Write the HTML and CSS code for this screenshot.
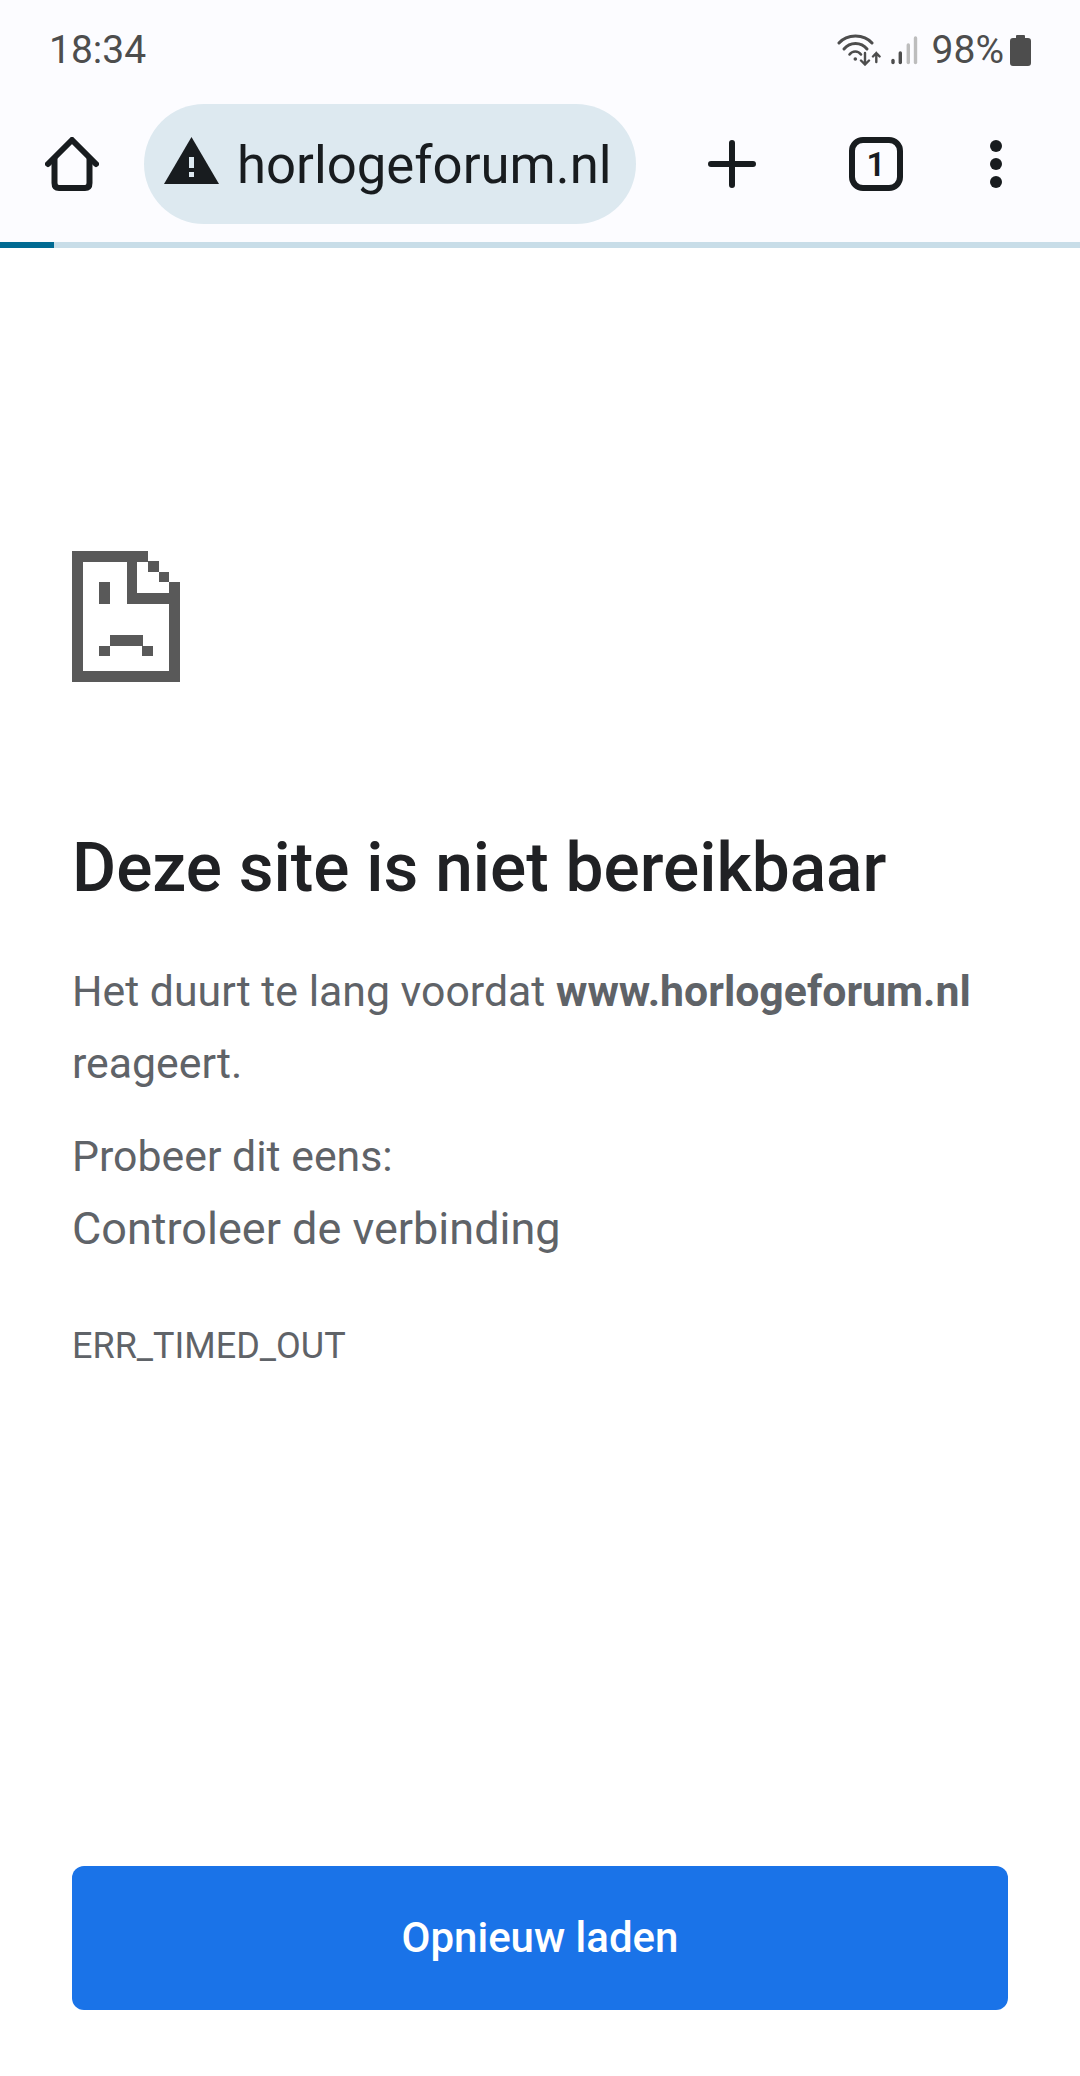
FILE: index.html
```html
<!DOCTYPE html>
<html lang="nl">
<head>
    <meta charset="UTF-8">
    <meta name="viewport" content="width=device-width, initial-scale=1.0">
    <title>horlogeforum.nl</title>
    <link rel="stylesheet" href="styles.css">
</head>
<body>
    <header class="chrome">
        <div class="status-bar">
            <span class="status-time">18:34</span>
            <div class="status-icons">
                <svg class="icon-wifi" width="44" height="32" viewBox="0 0 44 32" fill="none" stroke="#4d4d4d" stroke-linecap="round">
                    <path d="M2 9 C10 -0.500 27 -0.500 35 9" stroke-width="3"/>
                    <path d="M7 15 C13 7.500 24 7.500 30 15" stroke-width="3"/>
                    <path d="M12.500 20.500 C15.500 16.500 21 16.500 24 20.500" stroke-width="2.600"/>
                    <circle cx="18.300" cy="25" r="1.800" fill="#4d4d4d" stroke="none"/>
                    <path d="M28 19 V30 M24 26.500 L28 30.500 L32 26.500" stroke-width="2.400"/>
                    <path d="M39.300 28 V19 M36 22.500 L39.300 19 L42.600 22.500" stroke-width="2.400"/>
                </svg>
                <svg class="icon-signal" width="28" height="29" viewBox="0 0 28 29" stroke-linecap="round" stroke-width="3.400">
                    <path d="M3 24.500 V26.500" stroke="#4d4d4d"/>
                    <path d="M10.300 17 V26.500" stroke="#4d4d4d"/>
                    <path d="M18.300 9 V26.500" stroke="#bdbdbd"/>
                    <path d="M25.500 2 V26.500" stroke="#bdbdbd"/>
                </svg>
                <span class="status-battery-text">98%</span>
                <svg class="icon-battery" width="21" height="31" viewBox="0 0 21 31">
                    <path d="M7 0 H14 Q15 0 15 1 V3 H18 Q21 3 21 6 V28 Q21 31 18 31 H3 Q0 31 0 28 V6 Q0 3 3 3 H6 V1 Q6 0 7 0 Z" fill="#4d4d4d"/>
                </svg>
            </div>
        </div>
        <div class="toolbar">
            <svg class="btn-home" width="54" height="54" viewBox="0 0 54 54" fill="none" stroke="#181c1f" stroke-width="6" stroke-linecap="round" stroke-linejoin="round">
                <path d="M3 27 L27 3 L51 27"/>
                <path d="M9.500 22 V46 Q9.500 51 14 51 H40 Q44.500 51 44.500 46 V22"/>
            </svg>
            <div class="url-pill">
                <svg class="icon-warning" width="55" height="47" viewBox="0 0 55 47">
                    <path d="M27.500 0 L55 47 H0 Z" fill="#181c1f"/>
                    <rect x="25" y="20" width="5" height="11" fill="#dde9f0"/>
                    <rect x="25" y="35" width="5" height="5" fill="#dde9f0"/>
                </svg>
                <span class="url-text">horlogeforum.nl</span>
            </div>
            <svg class="btn-plus" width="48" height="48" viewBox="0 0 48 48" stroke="#181c1f" stroke-width="6" stroke-linecap="round">
                <path d="M24 3 V45 M3 24 H45"/>
            </svg>
            <div class="btn-tabs">1</div>
            <svg class="btn-menu" width="12" height="48" viewBox="0 0 12 48" fill="#181c1f">
                <circle cx="6" cy="6" r="6"/>
                <circle cx="6" cy="24" r="6"/>
                <circle cx="6" cy="42" r="6"/>
            </svg>
        </div>
        <div class="progress"><div class="progress-fill" style="width: 54px"></div></div>
    </header>

    <main class="error-page">
        <svg class="sad-tab" width="108" height="131" viewBox="0 0 108 131" fill="#595959" shape-rendering="crispEdges">
            <rect x="0" y="0" width="76" height="11"/>
            <rect x="0" y="0" width="11" height="131"/>
            <rect x="0" y="120" width="108" height="11"/>
            <rect x="97" y="31" width="11" height="100"/>
            <rect x="76" y="10" width="11" height="11"/>
            <rect x="87" y="21" width="10" height="10"/>
            <rect x="55" y="10" width="10" height="43"/>
            <rect x="55" y="42" width="43" height="11"/>
            <rect x="27" y="31" width="11" height="22"/>
            <rect x="38" y="84" width="33" height="11"/>
            <rect x="27" y="95" width="11" height="10"/>
            <rect x="70" y="95" width="11" height="10"/>
        </svg>
        <h1 class="error-title">Deze site is niet bereikbaar</h1>
        <p class="error-text">Het duurt te lang voordat <strong>www.horlogeforum.nl</strong> reageert.</p>
        <p class="error-text error-hint">Probeer dit eens:</p>
        <p class="error-suggestion">Controleer de verbinding</p>
        <div class="error-code">ERR_TIMED_OUT</div>
        <button class="reload-btn">Opnieuw laden</button>
    </main>
</body>
</html>
```

FILE: styles.css
```css
:root {
    --chrome-bg: #fcfcff;
    --icon-color: #181c1f;
    --status-color: #4d4d4d;
    --text-color: #5f6368;
    --title-color: #202124;
    --blue: #1a73e8;
    --font-family: Roboto, "Liberation Sans", sans-serif;
}

* {
    box-sizing: border-box;
    margin: 0;
    padding: 0;
}

html, body {
    height: 2076px;
}

body {
    display: flex;
    flex-direction: column;
    font-family: var(--font-family);
    background-color: #fff;
    overflow: hidden;
}

.chrome {
    background-color: var(--chrome-bg);
}

.status-bar {
    display: flex;
    align-items: center;
    justify-content: space-between;
    height: 104px;
    padding: 0 49px 4px 49px;
    color: var(--status-color);
    font-size: 39px;
}

.status-icons {
    display: flex;
    align-items: center;
}

.icon-wifi {
    margin-right: 9px;
}

.icon-signal {
    margin-right: 14px;
}

.status-battery-text {
    margin-right: 6px;
}

.toolbar {
    display: flex;
    align-items: center;
    height: 120px;
    padding-left: 45px;
}

.url-pill {
    display: flex;
    align-items: center;
    width: 492px;
    height: 120px;
    margin-left: 45px;
    padding-left: 20px;
    background-color: #dde9f0;
    border-radius: 60px;
}

.icon-warning {
    flex-shrink: 0;
    margin-top: -7px;
}

.url-text {
    margin: 2px 0 0 18px;
    color: var(--icon-color);
    font-size: 52.7px;
    white-space: nowrap;
}

.btn-plus {
    margin-left: 72px;
}

.btn-tabs {
    display: flex;
    align-items: center;
    justify-content: center;
    width: 54px;
    height: 54px;
    margin-left: 93px;
    border: 6px solid var(--icon-color);
    border-radius: 14px;
    color: var(--icon-color);
    font-size: 33px;
    font-weight: 600;
}

.btn-menu {
    margin-left: 87px;
}

.progress {
    height: 6px;
    margin-top: 18px;
    background-color: #c8dde8;
}

.progress-fill {
    height: 100%;
    background-color: #006a92;
}

.error-page {
    flex: 1;
    display: flex;
    flex-direction: column;
    align-items: flex-start;
    padding: 303px 72px 66px;
    background-color: #fff;
}

.error-title {
    margin-top: 144px;
    color: var(--title-color);
    font-size: 67.6px;
    font-weight: 500;
    line-height: 84px;
}

.error-text {
    margin-top: 46px;
    color: var(--text-color);
    font-size: 42.8px;
    line-height: 71.5px;
}

.error-hint {
    margin-top: 22px;
}

.error-suggestion {
    color: var(--text-color);
    font-size: 45px;
    line-height: 71.5px;
}

.error-code {
    margin-top: 61px;
    color: var(--text-color);
    font-size: 36px;
}

.reload-btn {
    width: 100%;
    height: 144px;
    margin-top: auto;
    padding-bottom: 2px;
    border: none;
    border-radius: 12px;
    background-color: var(--blue);
    color: #fff;
    font-family: var(--font-family);
    font-size: 42px;
    font-weight: 500;
}
```
